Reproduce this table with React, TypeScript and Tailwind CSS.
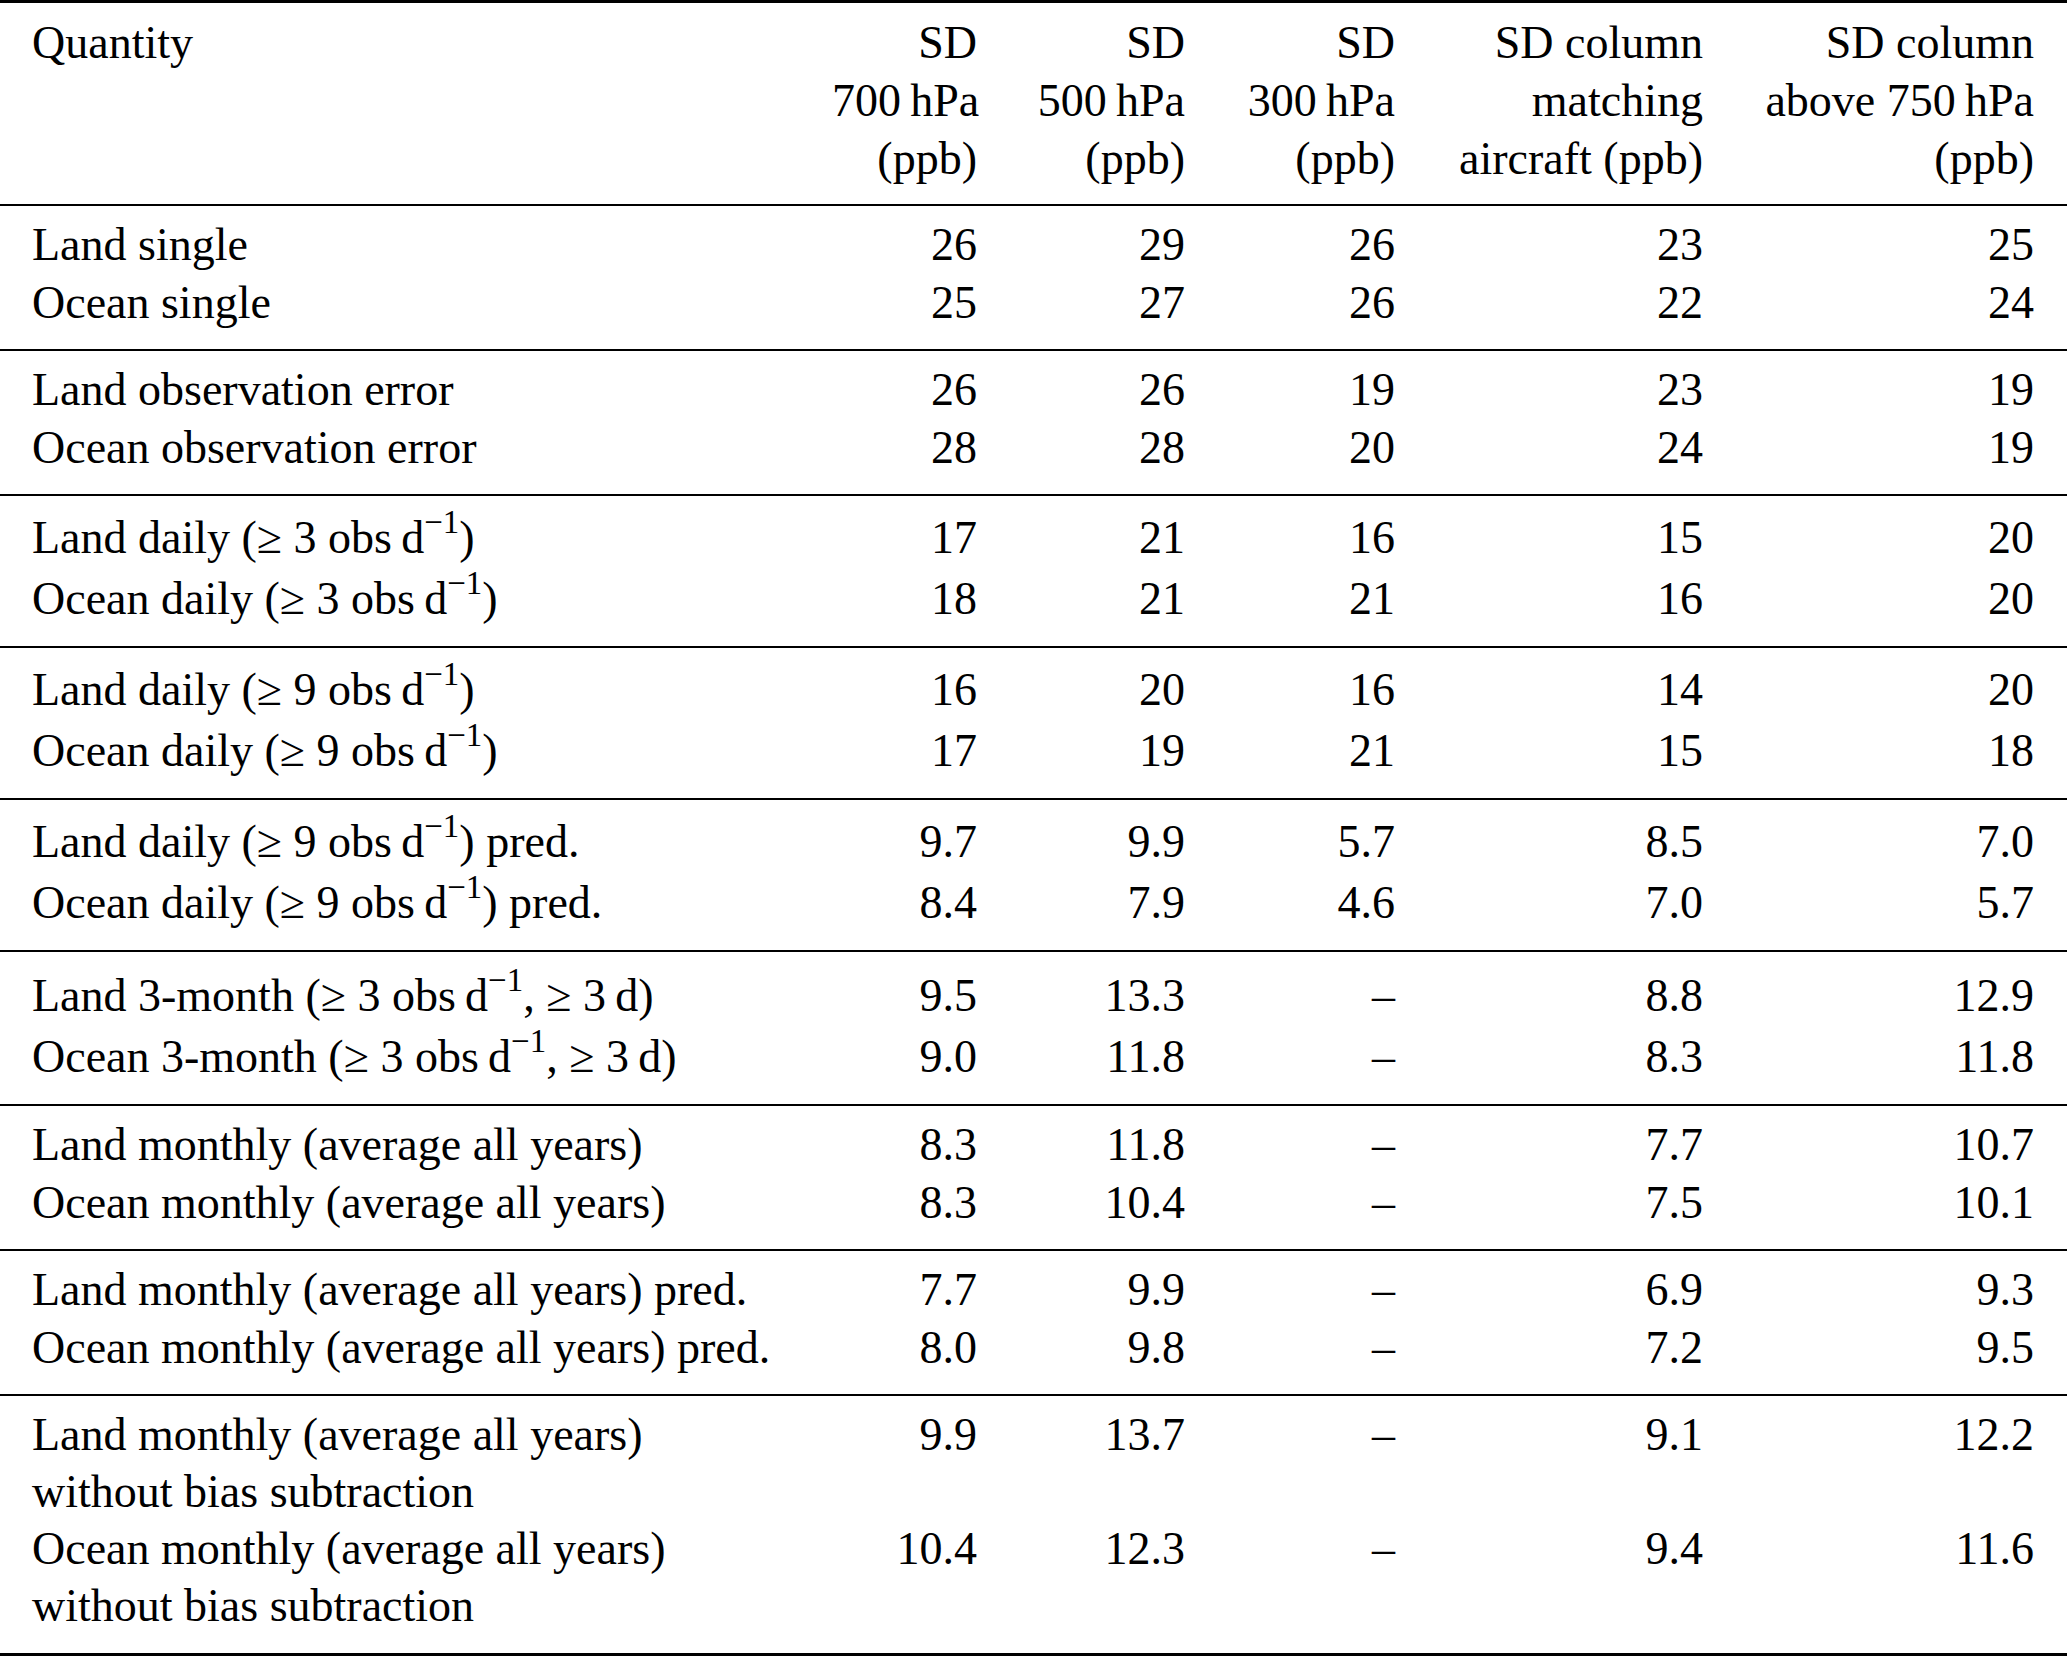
import type { ReactNode } from "react";

const Sup = () => (
    <span className="relative -top-[20px] text-[33px] leading-none">−1</span>
);

const Obs = ({ n, days }: { n: string; days?: boolean }) => (
    <>
        (≥ {n} obs{"\u2009"}d<Sup />
        {days ? ", ≥ 3\u2009d)" : ")"}
    </>
);

type Row = [ReactNode, string, string, string, string, string];

type Group = {
    rows: Row[];
    leading: string;
    pad: string;
};

const groups: Group[] = [
    {
        leading: "leading-[58px]",
        pad: "pt-[10px] pb-[17px]",
        rows: [
            ["Land single", "26", "29", "26", "23", "25"],
            ["Ocean single", "25", "27", "26", "22", "24"],
        ],
    },
    {
        leading: "leading-[58px]",
        pad: "pt-[10px] pb-[17px]",
        rows: [
            ["Land observation error", "26", "26", "19", "23", "19"],
            ["Ocean observation error", "28", "28", "20", "24", "19"],
        ],
    },
    {
        leading: "leading-[61px]",
        pad: "pt-[11px] pb-[17px]",
        rows: [
            [<>Land daily <Obs n="3" /></>, "17", "21", "16", "15", "20"],
            [<>Ocean daily <Obs n="3" /></>, "18", "21", "21", "16", "20"],
        ],
    },
    {
        leading: "leading-[61px]",
        pad: "pt-[11px] pb-[17px]",
        rows: [
            [<>Land daily <Obs n="9" /></>, "16", "20", "16", "14", "20"],
            [<>Ocean daily <Obs n="9" /></>, "17", "19", "21", "15", "18"],
        ],
    },
    {
        leading: "leading-[61px]",
        pad: "pt-[11px] pb-[17px]",
        rows: [
            [<>Land daily <Obs n="9" /> pred.</>, "9.7", "9.9", "5.7", "8.5", "7.0"],
            [<>Ocean daily <Obs n="9" /> pred.</>, "8.4", "7.9", "4.6", "7.0", "5.7"],
        ],
    },
    {
        leading: "leading-[61px]",
        pad: "pt-[13px] pb-[17px]",
        rows: [
            [<>Land 3-month <Obs n="3" days /></>, "9.5", "13.3", "–", "8.8", "12.9"],
            [<>Ocean 3-month <Obs n="3" days /></>, "9.0", "11.8", "–", "8.3", "11.8"],
        ],
    },
    {
        leading: "leading-[58px]",
        pad: "pt-[10px] pb-[17px]",
        rows: [
            ["Land monthly (average all years)", "8.3", "11.8", "–", "7.7", "10.7"],
            ["Ocean monthly (average all years)", "8.3", "10.4", "–", "7.5", "10.1"],
        ],
    },
    {
        leading: "leading-[58px]",
        pad: "pt-[10px] pb-[17px]",
        rows: [
            ["Land monthly (average all years) pred.", "7.7", "9.9", "–", "6.9", "9.3"],
            ["Ocean monthly (average all years) pred.", "8.0", "9.8", "–", "7.2", "9.5"],
        ],
    },
    {
        leading: "leading-[57px]",
        pad: "pt-[10px] pb-[19px]",
        rows: [
            [<>Land monthly (average all years)<br />without bias subtraction</>, "9.9", "13.7", "–", "9.1", "12.2"],
            [<>Ocean monthly (average all years)<br />without bias subtraction</>, "10.4", "12.3", "–", "9.4", "11.6"],
        ],
    },
];

const cols = "grid grid-cols-[800px_145px_208px_210px_308px_331px]";

const App = () => {
    return (
        <div className="w-[2067px] bg-white text-black text-[46px] font-['Liberation_Serif',_'Times_New_Roman',_serif]">
            <div className="h-[3px] bg-black" />
            <div className={`${cols} px-[32px] pt-[11px] pb-[16px] leading-[58px] whitespace-nowrap`}>
                <div>Quantity</div>
                <div className="text-right">SD<br />700{"\u2009"}hPa<br />(ppb)</div>
                <div className="text-right">SD<br />500{"\u2009"}hPa<br />(ppb)</div>
                <div className="text-right">SD<br />300{"\u2009"}hPa<br />(ppb)</div>
                <div className="text-right">SD column<br />matching<br />aircraft (ppb)</div>
                <div className="text-right">SD column<br />above 750{"\u2009"}hPa<br />(ppb)</div>
            </div>
            {groups.map((group, gi) => (
                <div key={gi} className={`border-t-2 border-black px-[32px] ${group.pad} ${group.leading}`}>
                    {group.rows.map((row, ri) => (
                        <div key={ri} className={cols}>
                            <div className="whitespace-nowrap">{row[0]}</div>
                            {row.slice(1).map((value, ci) => (
                                <div key={ci} className="text-right whitespace-nowrap">{value}</div>
                            ))}
                        </div>
                    ))}
                </div>
            ))}
            <div className="h-[3px] bg-black" />
        </div>
    );
};

export default App;
